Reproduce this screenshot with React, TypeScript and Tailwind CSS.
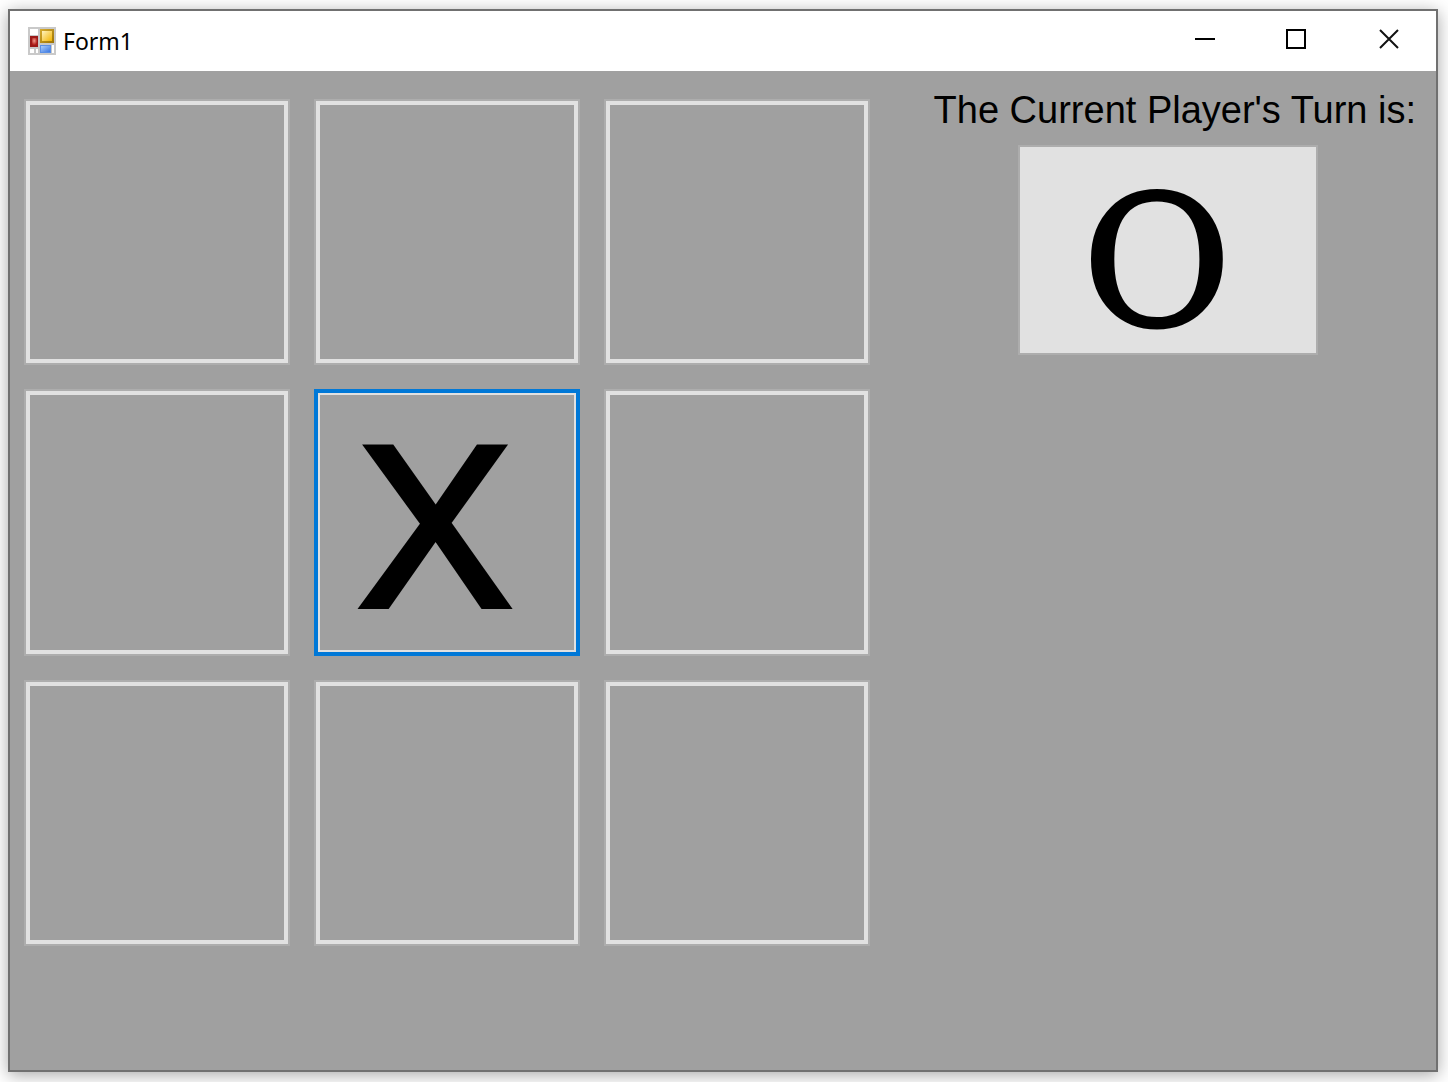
import { useState } from "react";

type Mark = "" | "X" | "O";

function AppIcon() {
  return (
    <svg viewBox="0 0 28 28" className="size-7 shrink-0" aria-hidden="true">
      <defs>
        <linearGradient id="gold" x1="0" y1="0" x2="1" y2="1">
          <stop offset="0" stopColor="#fff3c0" />
          <stop offset="1" stopColor="#f2b400" />
        </linearGradient>
        <linearGradient id="goldEdge" x1="0" y1="0" x2="1" y2="1">
          <stop offset="0" stopColor="#d6ab30" />
          <stop offset="1" stopColor="#9c7404" />
        </linearGradient>
        <linearGradient id="blue" x1="0" y1="0" x2="1" y2="1">
          <stop offset="0" stopColor="#a8ccff" />
          <stop offset="1" stopColor="#3c78e0" />
        </linearGradient>
        <radialGradient id="red" cx="0.45" cy="0.4" r="0.6">
          <stop offset="0" stopColor="#f09a8c" />
          <stop offset="1" stopColor="#b01c18" />
        </radialGradient>
      </defs>
      <rect width="28" height="28" fill="#c9c9c9" />
      <rect x="2" y="2" width="8" height="6" fill="#fff" />
      <rect x="2" y="22" width="4" height="4" fill="#fff" />
      <rect x="8" y="22" width="2" height="4" fill="#fff" />
      <rect x="24" y="18" width="2" height="8" fill="#fff" />
      <rect x="2" y="9" width="8" height="11" fill="#9c1a18" />
      <rect x="4" y="11" width="5" height="7" fill="url(#red)" />
      <rect x="12" y="2" width="14" height="14" fill="url(#goldEdge)" />
      <rect x="14" y="4" width="10" height="10" fill="url(#gold)" />
      <rect x="12" y="18" width="11" height="8" fill="#5a8fe6" />
      <rect x="13" y="19" width="9" height="6" fill="url(#blue)" />
    </svg>
  );
}

function TitleBar() {
  return (
    <header className="flex h-[60px] items-center bg-white pl-[18px]">
      <AppIcon />
      <h1 className="ml-[7px] flex-1 font-['Noto_Sans',sans-serif] text-[23px] leading-8 text-black">Form1</h1>
      <button type="button" aria-label="Minimize" className="flex h-full w-[90px] items-center justify-center">
        <svg viewBox="0 0 20 20" className="mb-1 size-5" aria-hidden="true">
          <path d="M0 10H20" stroke="#000" strokeWidth="2" />
        </svg>
      </button>
      <button type="button" aria-label="Maximize" className="flex h-full w-[92px] items-center justify-center">
        <svg viewBox="0 0 20 20" className="mb-1 size-5" aria-hidden="true">
          <rect x="1" y="1" width="18" height="18" fill="none" stroke="#000" strokeWidth="2" />
        </svg>
      </button>
      <button type="button" aria-label="Close" className="flex h-full w-[94px] items-center justify-center">
        <svg viewBox="0 0 20 20" className="mb-1 size-5" aria-hidden="true">
          <path d="M1 1L19 19M19 1L1 19" stroke="#111" strokeWidth="2" />
        </svg>
      </button>
    </header>
  );
}

function Cell({ mark, focused, label, onPick }: { mark: Mark; focused: boolean; label: string; onPick: () => void }) {
  return (
    <button
      type="button"
      aria-label={label}
      onClick={onPick}
      className={
        focused
          ? "flex items-center justify-center border-4 border-[#0078d7] bg-[#a0a0a0] pt-2 pr-6 shadow-[inset_0_0_0_2px_#e1e1e1] outline-none"
          : "flex items-center justify-center border-2 border-[#adadad] bg-[#a0a0a0] pt-2 pr-6 shadow-[inset_0_0_0_4px_#e1e1e1] outline-none"
      }
    >
      <span className="font-['Liberation_Sans',sans-serif] text-[230px] leading-none text-black [-webkit-text-stroke:6px_black]">
        {mark}
      </span>
    </button>
  );
}

export default function App() {
  const [board, setBoard] = useState<Mark[]>(["", "", "", "", "X", "", "", "", ""]);
  const [focus, setFocus] = useState(4);
  const [turn, setTurn] = useState<"X" | "O">("O");

  const pick = (i: number) => {
    setFocus(i);
    if (board[i]) return;
    setBoard(board.map((m, j) => (j === i ? turn : m)));
    setTurn(turn === "X" ? "O" : "X");
  };

  return (
    <div className="flex min-h-screen bg-white px-2 pt-[9px] pb-[10px] pr-[10px]">
      <main className="flex flex-1 flex-col border-2 border-[#707070] bg-[#a0a0a0] shadow-[0_3px_16px_rgba(0,0,0,0.35)]">
        <TitleBar />
        <div className="flex flex-1 items-start justify-between pt-7 pr-5 pl-[14px]">
          <section
            aria-label="Board"
            className="grid shrink-0 grid-cols-[266px_266px_266px] grid-rows-[266px_267px_266px] gap-6"
          >
            {board.map((m, i) => (
              <Cell key={i} mark={m} focused={i === focus} label={`Cell ${i + 1} ${m}`} onPick={() => pick(i)} />
            ))}
          </section>
          <aside className="-mt-3 flex flex-col items-center">
            <p className="font-['Liberation_Sans',sans-serif] text-[38px] leading-[46px] whitespace-nowrap text-black">
              The Current Player's Turn is:
            </p>
            <button
              type="button"
              aria-label={`Current player ${turn}`}
              className="mt-3 mr-[14px] flex h-[210px] w-[300px] items-center justify-center border-2 border-[#adadad] bg-[#e1e1e1] pt-6 pr-[22px]"
            >
              <span className="font-['DejaVu_Serif',serif] text-[182px] leading-none text-black [-webkit-text-stroke:3px_black]">
                {turn}
              </span>
            </button>
          </aside>
        </div>
      </main>
    </div>
  );
}
